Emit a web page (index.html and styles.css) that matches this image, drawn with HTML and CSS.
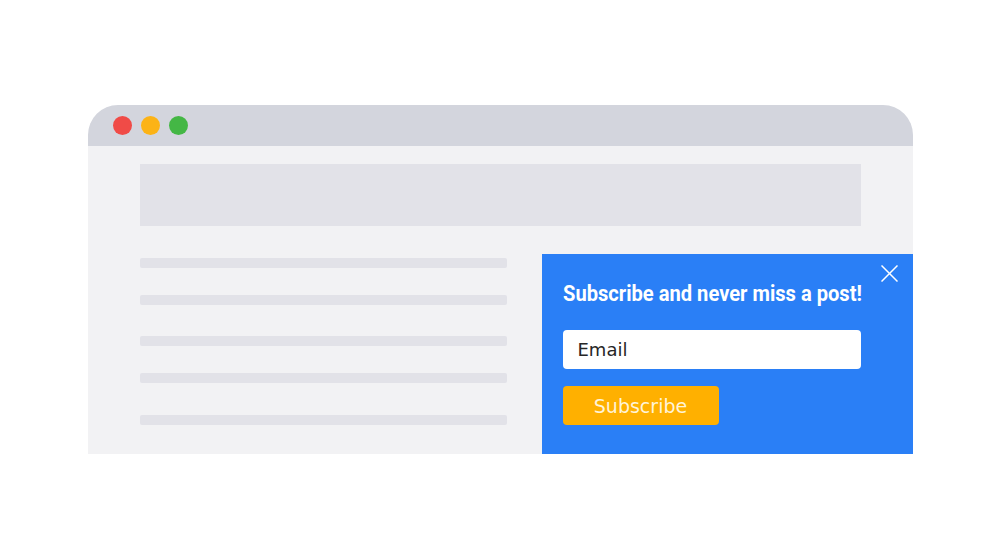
FILE: index.html
```html
<!DOCTYPE html>
<html lang="en">
<head>
    <meta charset="UTF-8">
    <meta name="viewport" content="width=device-width, initial-scale=1.0">
    <title>Subscribe popup</title>
    <link rel="stylesheet" href="styles.css">
</head>
<body>

    <div class="window">
        <!-- barra do navegador -->
        <div class="titlebar">
            <span class="dot red"></span>
            <span class="dot yellow"></span>
            <span class="dot green"></span>
        </div>

        <div class="content">
            <div class="banner"></div>

            <div class="row">
                <div class="lines">
                    <div class="line"></div>
                    <div class="line"></div>
                    <div class="line"></div>
                    <div class="line"></div>
                    <div class="line"></div>
                </div>

                <div class="popup">
                    <button class="close" aria-label="Close">
                        <svg width="17" height="17" viewBox="0 0 17 17">
                            <path d="M0.5 0.5 L16.5 16.5 M16.5 0.5 L0.5 16.5" stroke="#ffffff" stroke-width="1.5" fill="none"/>
                        </svg>
                    </button>
                    <h2 class="popup-title"><span>Subscribe and never miss a post!</span></h2>
                    <input type="text" class="email" placeholder="Email">
                    <button class="subscribe">Subscribe</button>
                </div>
            </div>
        </div>
    </div>

</body>
</html>
```

FILE: styles.css
```css
body {
    margin: 0;
    background-color: #ffffff;
    font-family: "DejaVu Sans", sans-serif;
}

.window {
    width: 825px;
    margin: 105px auto 0;
}

.titlebar {
    height: 41px;
    background-color: #d3d5dd;
    border-radius: 30px 30px 0 0;
    display: flex;
    align-items: center;
    gap: 9px;
    padding-left: 25px;
}

.dot {
    width: 19px;
    height: 19px;
    border-radius: 50%;
}
.red { background-color: #f04b47; }
.yellow { background-color: #fcb316; }
.green { background-color: #44b745; }

.content {
    background-color: #f2f2f4;
    padding: 18px 0 0 52px;
}

.banner {
    width: 721px;
    height: 62px;
    background-color: #e2e2e8;
}

.row {
    display: flex;
    justify-content: space-between;
    margin-top: 28px;
}

/* linhas de texto falsas */
.lines {
    width: 367px;
    padding-top: 4px;
}

.line {
    height: 10px;
    background-color: #e2e2e8;
    border-radius: 2px;
    margin-bottom: 27px;
}

.line:nth-child(even) {
    margin-bottom: 31px;
}

.line:nth-child(4) {
    margin-bottom: 32px;
}

.popup {
    position: relative;
    width: 371px;
    height: 200px;
    box-sizing: border-box;
    background-color: #2a7ff6;
    padding: 28px 0 0 21px;
}

.close {
    position: absolute;
    top: 11px;
    right: 15px;
    padding: 0;
    border: none;
    background: none;
    line-height: 0;
    cursor: pointer;
}

.popup-title {
    margin: 0;
    height: 24px;
    font-family: Roboto, sans-serif;
    font-weight: 700;
    font-size: 22px;
    line-height: 24px;
    color: #ffffff;
    white-space: nowrap;
}

.popup-title span {
    display: inline-block;
    transform: scaleX(0.915);
    transform-origin: left center;
}

.email {
    display: block;
    margin-top: 24px;
    width: 298px;
    height: 39px;
    box-sizing: border-box;
    border: none;
    border-radius: 4px;
    padding: 0 15px;
    font-family: "DejaVu Sans", sans-serif;
    font-size: 18px;
    color: #222222;
    outline: none;
}

.email::placeholder {
    color: #262626;
    opacity: 1;
}

.subscribe {
    display: block;
    margin-top: 17px;
    width: 156px;
    height: 39px;
    border: none;
    border-radius: 4px;
    background-color: #ffb000;
    color: #fff4d8;
    font-family: "DejaVu Sans", sans-serif;
    font-size: 19px;
    cursor: pointer;
}
```
